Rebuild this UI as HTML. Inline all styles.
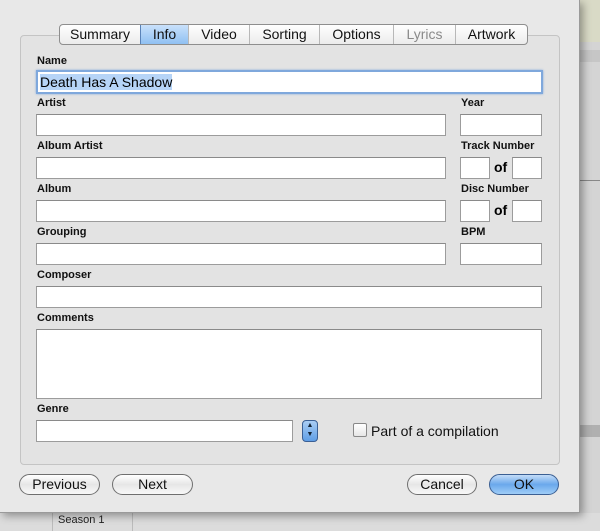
<!DOCTYPE html>
<html><head><style>
*{box-sizing:border-box;margin:0;padding:0}
body{width:600px;height:531px;overflow:hidden;background:#d4d4d4;font-family:"Liberation Sans",sans-serif;position:relative}
.a{position:absolute}
.dlg{left:0;top:0;width:580px;height:513px;background:#e8e8e8;border-right:1px solid #9a9a9a;border-bottom:1px solid #9a9a9a;box-shadow:3px 3px 8px rgba(0,0,0,.35)}
.grp{left:20px;top:35px;width:540px;height:430px;border:1px solid #c4c4c4;border-radius:4px;background:#e3e3e3}
.tabs{left:59px;top:24px;height:21px;display:flex;border:1px solid #8e8e8e;border-radius:4px;overflow:hidden;background:linear-gradient(#fff,#ececec)}
.tabs div{font-size:14px;line-height:19px;text-align:center;border-left:1px solid #b8b8b8;color:#111}
.tabs div:first-child{border-left:none}
.lbl{font-size:11px;font-weight:bold;color:#111}
.in{background:#fff;border:1px solid #9c9c9c;border-top-color:#8a8a8a;height:22px}
.btn{height:21px;border:1px solid #6f6f6f;border-radius:11px;background:linear-gradient(#fff,#e6e6e6 50%,#f8f8f8);font-size:14px;text-align:center;line-height:19px;color:#111}
</style></head><body>
<div class="a" style="left:580px;top:0;width:20px;height:42px;background:#d9dac6"></div>
<div class="a" style="left:580px;top:50px;width:20px;height:12px;background:#c6c6c6"></div>
<div class="a" style="left:580px;top:180px;width:20px;height:1px;background:#888"></div>
<div class="a" style="left:580px;top:425px;width:20px;height:12px;background:#b0b0b0"></div>
<div class="a" style="left:0;top:513px;width:600px;height:18px;background:#dcdcdc"></div>
<div class="a" style="left:52px;top:513px;width:1px;height:18px;background:#bbb"></div>
<div class="a" style="left:132px;top:513px;width:1px;height:18px;background:#bbb"></div>
<div class="a" style="left:58px;top:514px;font-size:11px;color:#222">Season 1</div>
<div class="a dlg"></div>
<div class="a grp"></div>
<div class="a tabs">
<div style="width:80px">Summary</div><div style="width:48px;background:linear-gradient(#c9e1fb,#8fc0f2);border-left-color:#5a83b8">Info</div><div style="width:61px">Video</div><div style="width:70px">Sorting</div><div style="width:74px">Options</div><div style="width:62px;color:#8a8a8a">Lyrics</div><div style="width:72px">Artwork</div>
</div>
<div class="a lbl" style="left:37px;top:55px">Name</div>
<div class="a in" style="left:36px;top:70px;width:507px;height:24px;border:2px solid #7fa8dc;box-shadow:0 0 2px #7fa8dc;font-size:14px;line-height:20px;padding-left:2px"><span style="background:#b6d4f7">Death Has A Shadow</span></div>
<div class="a lbl" style="left:37px;top:97px">Artist</div>
<div class="a in" style="left:36px;top:114px;width:410px"></div>
<div class="a lbl" style="left:461px;top:97px">Year</div>
<div class="a in" style="left:460px;top:114px;width:82px"></div>
<div class="a lbl" style="left:37px;top:140px">Album Artist</div>
<div class="a in" style="left:36px;top:157px;width:410px"></div>
<div class="a lbl" style="left:461px;top:140px">Track Number</div>
<div class="a in" style="left:460px;top:157px;width:30px"></div>
<div class="a" style="left:494px;top:159px;font-size:14px;font-weight:bold">of</div>
<div class="a in" style="left:512px;top:157px;width:30px"></div>
<div class="a lbl" style="left:37px;top:183px">Album</div>
<div class="a in" style="left:36px;top:200px;width:410px"></div>
<div class="a lbl" style="left:461px;top:183px">Disc Number</div>
<div class="a in" style="left:460px;top:200px;width:30px"></div>
<div class="a" style="left:494px;top:202px;font-size:14px;font-weight:bold">of</div>
<div class="a in" style="left:512px;top:200px;width:30px"></div>
<div class="a lbl" style="left:37px;top:226px">Grouping</div>
<div class="a in" style="left:36px;top:243px;width:410px"></div>
<div class="a lbl" style="left:461px;top:226px">BPM</div>
<div class="a in" style="left:460px;top:243px;width:82px"></div>
<div class="a lbl" style="left:37px;top:269px">Composer</div>
<div class="a in" style="left:36px;top:286px;width:506px"></div>
<div class="a lbl" style="left:37px;top:312px">Comments</div>
<div class="a in" style="left:36px;top:329px;width:506px;height:70px"></div>
<div class="a lbl" style="left:37px;top:403px">Genre</div>
<div class="a in" style="left:36px;top:420px;width:257px"></div>
<div class="a" style="left:302px;top:420px;width:16px;height:22px;border:1px solid #3a5f94;border-radius:4px;background:linear-gradient(#a9cdf4,#5f9ee6);font-size:7px;line-height:9px;text-align:center;color:#123">▲<br>▼</div>
<div class="a" style="left:353px;top:423px;width:14px;height:14px;border:1px solid #888;border-radius:2px;background:linear-gradient(#fff,#e6e6e6)"></div>
<div class="a" style="left:371px;top:423px;font-size:14px;color:#111">Part of a compilation</div>
<div class="a btn" style="left:19px;top:474px;width:81px">Previous</div>
<div class="a btn" style="left:112px;top:474px;width:81px">Next</div>
<div class="a btn" style="left:407px;top:474px;width:70px">Cancel</div>
<div class="a btn" style="left:489px;top:474px;width:70px;border-color:#3b5f93;background:linear-gradient(#c4ddf8,#6aa8ec 50%,#9fcdf7)">OK</div>
</body></html>
